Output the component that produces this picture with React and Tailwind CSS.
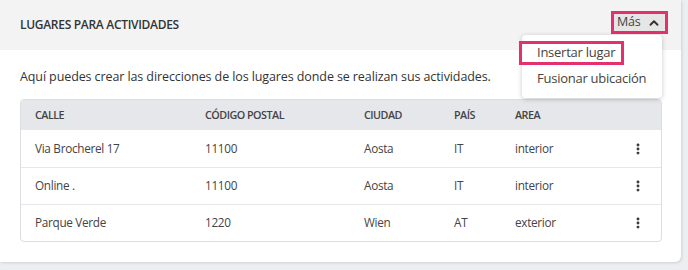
import { ChevronUp, MoreVertical } from 'lucide-react'

const rows = [
  { calle: 'Via Brocherel 17', cp: '11100', ciudad: 'Aosta', pais: 'IT', area: 'interior' },
  { calle: 'Online .', cp: '11100', ciudad: 'Aosta', pais: 'IT', area: 'interior' },
  { calle: 'Parque Verde', cp: '1220', ciudad: 'Wien', pais: 'AT', area: 'exterior' },
]

function Cols({ children, className = '' }) {
  return <div className={`grid grid-cols-[170px_159px_90px_61px_1fr_30px] items-center pl-[14px] ${className}`}>{children}</div>
}

export default function App() {
  return (
    <div className="w-[688px] h-[270px] bg-[#eceef1] font-['Open_Sans',sans-serif] text-[#333]">
      <div className="w-[681px] h-[262px] bg-white rounded-br-md shadow-[1px_1px_3px_rgba(0,0,0,0.12)]">
        {/* header */}
        <div className="relative h-[50px] bg-[#f3f3f3] flex items-start justify-between pl-5 pr-[13px] pt-[11px]">
          <h2 className="self-center -mt-[11px] text-[12px] font-semibold text-[#333] tracking-[-0.3px]">LUGARES PARA ACTIVIDADES</h2>
          <button className="w-[57px] h-[23px] pl-[3px] bg-[#e6e6e6] border-[3px] border-[#e5306f] flex items-center gap-[6px] text-[12.5px] text-[#444] tracking-[-0.2px]">
            Más
            <ChevronUp className="w-[14px] h-[14px] text-[#333]" strokeWidth={3.2} />
          </button>
          <div className="absolute left-[522px] top-[35px] w-[140px] bg-white rounded shadow-[0_1px_5px_rgba(0,0,0,0.22)] pt-[6px] pb-[6px] text-[13px] text-[#444] tracking-[-0.25px] z-10">
            <div className="-ml-[3px] w-[105px] h-[24px] flex items-center pl-[15px] border-[3px] border-[#e5306f]">Insertar lugar</div>
            <div className="mt-[1px] h-[26px] flex items-center pl-[15px]">Fusionar ubicación</div>
          </div>
        </div>
        {/* body */}
        <div className="px-5 pt-[17px]">
          <p className="text-[12.5px] text-[#333] leading-[20px] tracking-[-0.1px]">Aquí puedes crear las direcciones de los lugares donde se realizan sus actividades.</p>
          <div className="mt-[12px] w-[642px] border border-[#dcdde0] rounded overflow-hidden text-[11.75px] tracking-[-0.3px]">
            <Cols className="h-[30px] bg-[#e5e7ea] text-[10.75px] font-semibold text-[#444] tracking-[-0.5px]">
              <span>CALLE</span>
              <span>CÓDIGO POSTAL</span>
              <span>CIUDAD</span>
              <span>PAÍS</span>
              <span>AREA</span>
              <span />
            </Cols>
            {rows.map((r, i) => (
              <Cols key={i} className={`h-[37px] text-[#444] ${i > 0 ? 'border-t border-[#e6e7ea]' : ''}`}>
                <span>{r.calle}</span>
                <span>{r.cp}</span>
                <span>{r.ciudad}</span>
                <span>{r.pais}</span>
                <span>{r.area}</span>
                <span className="flex justify-start">
                  <MoreVertical className="w-[14px] h-[14px] text-[#333]" strokeWidth={3} />
                </span>
              </Cols>
            ))}
          </div>
        </div>
      </div>
    </div>
  )
}
